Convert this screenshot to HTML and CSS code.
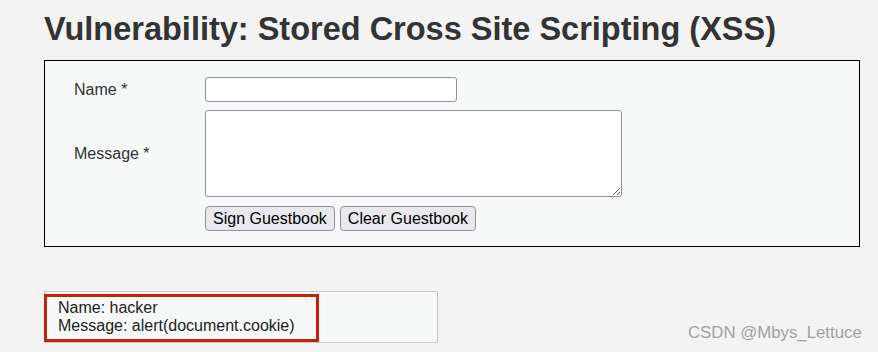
FILE: index.html
```html
<!DOCTYPE html>
<html>
<head>
<meta charset="utf-8">
<link rel="stylesheet" href="styles.css">
</head>
<body>
<div class="page">
  <h1 class="title">Vulnerability: Stored Cross Site Scripting (XSS)</h1>
  <div class="vuln-box">
    <form class="guest-form">
      <label class="lbl lbl-name">Name *</label>
      <div class="field"><input class="txt-name" type="text"></div>
      <label class="lbl lbl-msg">Message *</label>
      <div class="field"><textarea class="txt-msg"></textarea></div>
      <div class="spacer"></div>
      <div class="btns">
        <button type="button" class="btn">Sign Guestbook</button>
        <button type="button" class="btn">Clear Guestbook</button>
      </div>
    </form>
  </div>
  <div class="entry">
    <div class="entry-mark">
      <div>Name: hacker</div>
      <div>Message: alert(document.cookie)</div>
    </div>
  </div>
</div>
<div class="watermark">CSDN @Mbys_Lettuce</div>
</body>
</html>
```
FILE: styles.css
```css
html, body {
  margin: 0;
  padding: 0;
  background: #f3f3f3;
  font-family: "Liberation Sans", Arial, sans-serif;
  color: #333;
}
.page {
  padding: 0 18px 0 44px;
}
.title {
  margin: 0;
  padding-top: 11px;
  font-size: 32.5px;
  line-height: 37px;
  font-weight: bold;
  color: #333;
}
.vuln-box {
  margin-top: 12px;
  border: 1px solid #000;
  background: #f7f8f8;
  padding: 16px 0 15px 29px;
}
.guest-form {
  display: grid;
  grid-template-columns: 131px auto;
  row-gap: 8px;
  align-items: center;
}
.lbl {
  font-size: 16px;
  color: #333;
}
.field { display: flex; }
.txt-name {
  box-sizing: border-box;
  width: 252px;
  height: 25px;
  margin: 0;
  border: 1px solid #8f8f9d;
  border-radius: 3px;
  background: #fff;
}
.txt-msg {
  box-sizing: border-box;
  width: 417px;
  height: 87px;
  margin: 0;
  border: 1px solid #8f8f9d;
  border-radius: 3px;
  background: #fff;
}
.btns {
  display: flex;
  gap: 5px;
  margin-top: 1px;
}
.btn {
  box-sizing: border-box;
  height: 25px;
  margin: 0;
  padding: 0 7px;
  font-family: "Liberation Sans", Arial, sans-serif;
  font-size: 16px;
  color: #000;
  background: #e9e9ed;
  border: 1px solid #8f8f9d;
  border-radius: 4px;
}
.entry {
  margin-top: 44px;
  width: 392px;
  height: 50px;
  border: 1px solid #c8c8c8;
  background: #f7f8f8;
}
.entry-mark {
  box-sizing: border-box;
  width: 275px;
  height: 48px;
  margin: 2px 0 0 -1px;
  border: 3px solid #c4200c;
  padding: 2px 0 0 11px;
  font-size: 16px;
  line-height: 18px;
  color: #222;
}
.watermark {
  position: absolute;
  left: 688px;
  top: 323px;
  font-size: 16.8px;
  color: #a0a0a0;
  font-family: "Liberation Sans", Arial, sans-serif;
}
```
